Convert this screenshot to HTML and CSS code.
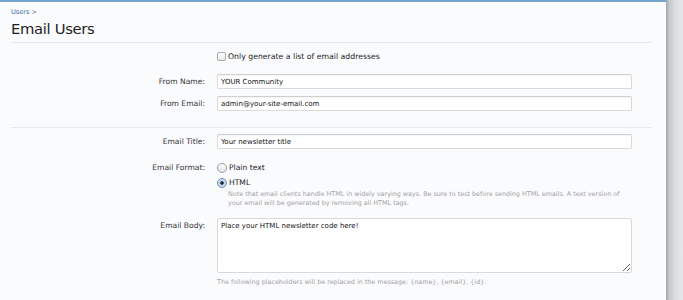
FILE: index.html
```html
<!DOCTYPE html>
<html>
<head>
<meta charset="utf-8">
<link rel="stylesheet" href="styles.css">
</head>
<body>
<div class="page">
  <main class="panel">
    <div class="crumbs"><a class="crumb" href="#">Users</a> <span class="sep">&gt;</span></div>
    <h1 class="title">Email Users</h1>

    <div class="form">
      <div class="row row-check">
        <div class="label"></div>
        <label class="choice choice-wide"><input type="checkbox" class="check"> Only generate a list of email addresses</label>
      </div>
      <div class="row row-name">
        <div class="label">From Name:</div>
        <input class="text" type="text" value="YOUR Community">
      </div>
      <div class="row row-email">
        <div class="label">From Email:</div>
        <input class="text" type="text" value="admin@your-site-email.com">
      </div>

      <hr class="divider">

      <div class="row row-title">
        <div class="label">Email Title:</div>
        <input class="text" type="text" value="Your newsletter title">
      </div>
      <div class="row row-format">
        <div class="label">Email Format:</div>
        <div class="options">
          <label class="choice"><input type="radio" name="fmt" class="radio"> Plain text</label>
          <label class="choice"><input type="radio" name="fmt" class="radio" checked> HTML</label>
          <p class="hint indent">Note that email clients handle HTML in widely varying ways. Be sure to test before sending HTML emails. A text version of your email will be generated by removing all HTML tags.</p>
        </div>
      </div>
      <div class="row row-body">
        <div class="label label-top">Email Body:</div>
        <div class="body-field">
          <textarea class="area">Place your HTML newsletter code here!</textarea>
          <p class="hint">The following placeholders will be replaced in the message: {name}, {email}, {id}.</p>
        </div>
      </div>
    </div>
  </main>
  <div class="rail"></div>
</div>
</body>
</html>
```

FILE: styles.css
```css
* { box-sizing: border-box; }

html, body {
  margin: 0;
  padding: 0;
  height: 300px;
  overflow: hidden;
}

body {
  font-family: "DejaVu Sans", "Noto Sans", sans-serif;
  color: #222;
  background: #fafbfd;
}

.page {
  display: flex;
  height: 300px;
}

.panel {
  width: 666px;
  flex: none;
  background: #fafbfd;
  border-top: 2px solid #77a3ce;
  padding: 5px 14px 0 11px;
}

.rail {
  flex: 1;
  background: linear-gradient(to right, #9ea4a9 0, #c3c7ca 3px, #dcdfe1 9px, #e6e8ea 100%);
}

.crumbs {
  height: 10px;
  line-height: 10px;
  font-size: 6.6px;
}

.crumb {
  color: #3d6fa6;
  text-decoration: none;
}

.sep {
  color: #777;
}

.title {
  margin: 1px 0 0;
  font-size: 14.8px;
  font-weight: normal;
  line-height: 22px;
  color: #1e1e1e;
  letter-spacing: -0.35px;
  border-bottom: 1px solid #e4eaf0;
  box-sizing: content-box;
  height: 22px;
  padding-bottom: 2px;
}

.form {
  font-size: 7.6px;
  color: #333;
}

.row {
  display: grid;
  grid-template-columns: 194px 415px;
  column-gap: 12px;
  align-items: center;
}

.label {
  text-align: right;
  color: #333;
}

.label-top {
  align-self: start;
  padding-top: 3px;
  line-height: 9px;
}

.row-check { margin-top: 6px; height: 15px; }
.row-name { margin-top: 10px; }
.row-email { margin-top: 7px; }
.row-title { margin-top: 6px; }
.row-format { margin-top: 11px; align-items: start; }
.row-format .label { line-height: 15px; }
.row-body { margin-top: 10px; }

.divider {
  border: 0;
  border-top: 1px solid #e4eaf0;
  margin: 16px 0 0;
  width: 641px;
}

.text {
  display: block;
  width: 415px;
  height: 15px;
  border: 1px solid #d9d9d9;
  border-top-color: #cfcfcf;
  border-radius: 2px;
  background: #fff;
  box-shadow: inset 0 1px 1px rgba(0,0,0,0.04);
  font-family: "DejaVu Sans", sans-serif;
  font-size: 7px;
  color: #111;
  padding: 0 3px;
  margin: 0;
  outline: none;
}

.choice {
  display: flex;
  align-items: center;
  height: 15px;
  font-size: 7.6px;
  color: #222;
  gap: 2px;
}

.choice-wide { font-size: 7.75px; }

.check {
  appearance: none;
  -webkit-appearance: none;
  margin: 0;
  width: 9px;
  height: 9px;
  border: 1px solid #a9a9a9;
  border-radius: 2px;
  background: linear-gradient(#ffffff, #e9e9e9);
}

.radio {
  appearance: none;
  -webkit-appearance: none;
  margin: 0;
  width: 10px;
  height: 10px;
  border: 1px solid #9c9c9c;
  border-radius: 50%;
  background: linear-gradient(#ffffff, #e4e4e4);
}

.radio:checked {
  border-color: #6f8fb5;
  background: radial-gradient(circle, #1d2a3a 0, #1d2a3a 1.4px, #b9d1ea 2px, #dbe8f6 100%);
}

.hint {
  margin: 0;
  font-size: 6.4px;
  line-height: 9px;
  color: #a2a2a2;
}

.indent {
  padding-left: 11px;
}

.area {
  display: block;
  width: 415px;
  height: 55px;
  margin: 0;
  border: 1px solid #d9d9d9;
  border-radius: 2px;
  background: #fff;
  font-family: "DejaVu Sans", sans-serif;
  font-size: 7px;
  line-height: 9px;
  color: #111;
  padding: 3px 3px;
  outline: none;
}

.body-field .hint {
  margin-top: 5px;
}
```
